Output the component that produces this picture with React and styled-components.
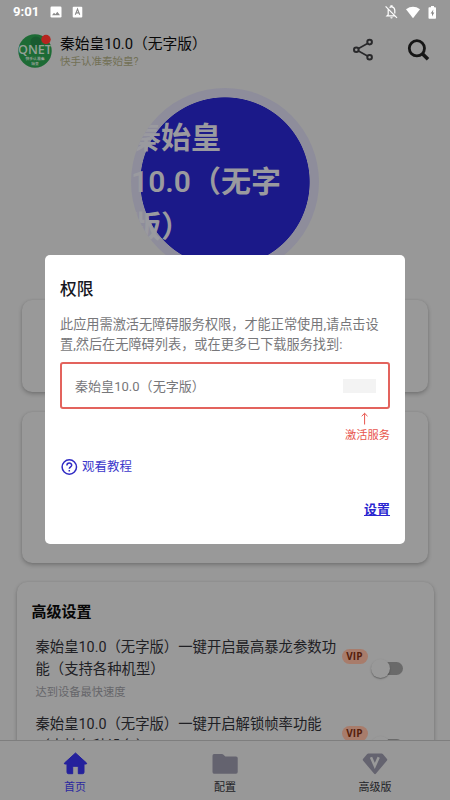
import React from "react";
import styled, { createGlobalStyle } from "styled-components";

const GlobalStyle = createGlobalStyle`
  * { box-sizing: border-box; }
  body { margin: 0; background: #999; }
`;

const Screen = styled.div`
  position: relative;
  width: 450px;
  height: 800px;
  overflow: hidden;
  display: flex;
  flex-direction: column;
  background: #989898;
  font-family: Roboto, "Noto Sans CJK SC", sans-serif;
  color: #0b0b0b;
`;

const StatusBar = styled.div`
  height: 24px;
  padding: 0 13px;
  display: flex;
  align-items: center;
  color: #fff;
`;

const Clock = styled.span`
  width: 37px;
  font-size: 13.2px;
  line-height: 20px;
  font-weight: 700;
`;

const StatusGroup = styled.div`
  display: flex;
  align-items: center;
  gap: ${(p) => p.$gap}px;
  margin-left: ${(p) => (p.$end ? "auto" : "0")};
  svg { display: block; }
`;

const Header = styled.header`
  height: 56px;
  padding: 10px 19px 0 18px;
  display: flex;
  align-items: flex-start;
`;

const Avatar = styled.svg`
  display: block;
`;

const HeaderText = styled.div`
  margin-left: 8px;
  flex: 1;
`;

const AppTitle = styled.div`
  font-size: 14.75px;
  line-height: 20px;
  height: 20px;
  white-space: nowrap;
  color: #080808;
`;

const AppSubtitle = styled.div`
  font-size: 10.5px;
  line-height: 16px;
  color: #727055;
`;

const HeaderActions = styled.div`
  display: flex;
  gap: 32px;
  padding-top: 3px;
  svg { display: block; }
`;

const Content = styled.main`
  flex: 1;
  min-height: 0;
  overflow: hidden;
  display: flex;
  flex-direction: column;
  align-items: center;
`;

const PowerButton = styled.div`
  flex: none;
  margin-top: 8px;
  width: 188px;
  height: 188px;
  border-radius: 50%;
  background: radial-gradient(circle, #1b1989 84.3px, #8e8d9b 85px);
  overflow: hidden;
  display: flex;
  align-items: center;
`;

const PowerLabel = styled.div`
  flex: none;
  width: 188px;
  padding-top: 1px;
  font-size: 30px;
  line-height: 44.5px;
  font-weight: 600;
  color: #9a9a9f;
  white-space: nowrap;
`;

const Card = styled.section`
  flex: none;
  width: ${(p) => p.$width}px;
  height: ${(p) => p.$height}px;
  margin-top: ${(p) => p.$gap}px;
  border-radius: 10px;
  background: #999;
  box-shadow: 0 2px 4px rgba(0, 0, 0, 0.24), 0 0 2px rgba(0, 0, 0, 0.08);
`;

const SettingsCard = styled(Card)`
  padding: 18px 28px 0 15px;
`;

const SectionTitle = styled.h2`
  margin: 0;
  font-size: 15px;
  line-height: 24px;
  font-weight: 700;
  color: #070707;
`;

const SettingRow = styled.div`
  display: flex;
  height: 77px;
  padding: 13px 0 0 4px;
`;

const SettingText = styled.div`
  width: 306px;
`;

const SettingName = styled.div`
  font-size: 14.35px;
  line-height: 21.5px;
  color: #202024;
  white-space: nowrap;
`;

const SettingNote = styled.div`
  margin-top: 4px;
  font-size: 11.25px;
  line-height: 18px;
  color: #66666a;
`;

const VipBadge = styled.span`
  margin-top: 12px;
  width: 26px;
  height: 15px;
  border-radius: 8px;
  background: #a87c6b;
  color: #551e0c;
  font-family: "Open Sans", sans-serif;
  font-size: 10px;
  line-height: 15px;
  font-weight: 700;
  letter-spacing: 0.2px;
  text-align: center;
`;

const Switch = styled.span`
  display: flex;
  align-items: center;
  justify-content: flex-start;
  margin: 24.5px 0 0 6px;
  width: 29px;
  height: 13px;
  border-radius: 7px;
  background: #6a6a6a;
`;

const Thumb = styled.span`
  flex: none;
  margin-left: -3px;
  width: 19px;
  height: 19px;
  border-radius: 50%;
  background: #999;
  box-shadow: 0 1px 1.5px rgba(0, 0, 0, 0.35);
`;

const NavBar = styled.nav`
  flex: none;
  height: 60px;
  border-top: 1px solid #7e7e7e;
  background: #989898;
  display: grid;
  grid-template-columns: repeat(3, 1fr);
`;

const NavItem = styled.div`
  display: flex;
  flex-direction: column;
  align-items: center;
  padding-top: 9px;
  font-size: 11px;
  line-height: 16px;
  color: ${(p) => (p.$active ? "#2b28a0" : "#222226")};
  svg { display: block; margin-bottom: 4px; }
`;

const Dialog = styled.div`
  position: absolute;
  left: 45px;
  top: 255px;
  width: 360px;
  height: 289px;
  padding: 21px 15px 0;
  border-radius: 5px;
  background: #fff;
  display: flex;
  flex-direction: column;
`;

const DialogTitle = styled.h1`
  margin: 0;
  font-size: 16.7px;
  line-height: 28px;
  font-weight: 500;
  color: #17171f;
`;

const DialogBody = styled.p`
  margin: 11px 0 0;
  font-size: 13.18px;
  line-height: 19.5px;
  color: #77777a;
  white-space: nowrap;
`;

const ServiceBox = styled.div`
  margin-top: 8px;
  height: 47px;
  flex: none;
  padding: 0 12px 0 13px;
  border: 2px solid #e3635d;
  border-radius: 3px;
  display: flex;
  align-items: center;
  justify-content: space-between;
  font-size: 13.05px;
  color: #77777a;
`;

const ServicePlaceholder = styled.span`
  width: 33px;
  height: 14px;
  background: #f3f3f3;
`;

const ActivateHint = styled.div`
  align-self: flex-end;
  margin-top: 3px;
  display: flex;
  flex-direction: column;
  align-items: center;
  font-size: 11.25px;
  line-height: 17px;
  color: #e8544d;
  svg { display: block; margin: 0 4px 2px 0; }
`;

const TutorialLink = styled.div`
  margin-top: 13.5px;
  display: flex;
  align-items: center;
  gap: 4px;
  font-size: 12.5px;
  line-height: 18px;
  color: #3d38cb;
  svg { display: block; }
`;

const SettingsLink = styled.span`
  align-self: flex-end;
  margin-top: 24.5px;
  font-size: 13px;
  line-height: 20px;
  font-weight: 700;
  color: #2a26d0;
  text-decoration: underline;
  text-decoration-thickness: 1px;
  text-underline-offset: 1px;
`;

const AvatarText = styled.text`
  font-family: "Open Sans", "Noto Sans CJK SC", sans-serif;
  font-weight: 600;
  text-anchor: middle;
  fill: #93a096;
`;

const settings = [
  {
    lines: ["秦始皇10.0（无字版）一键开启最高暴龙参数功", "能（支持各种机型）"],
    note: "达到设备最快速度",
  },
  {
    lines: ["秦始皇10.0（无字版）一键开启解锁帧率功能", "（支持各种设备）"],
    note: "",
  },
];

function AppLogo() {
  return (
    <Avatar width="34" height="34" viewBox="0 0 34 34">
      <clipPath id="disc"><circle cx="17" cy="17" r="16.7" /></clipPath>
      <g clipPath="url(#disc)">
        <rect width="34" height="34" fill="#1d6b35" />
        <circle cx="18" cy="8" r="5.5" fill="#195b30" />
        <AvatarText x="17" y="20.4" fontSize="12.5" textLength="34" lengthAdjust="spacingAndGlyphs">QNET</AvatarText>
        <AvatarText x="17" y="26.2" fontSize="3.8">快手认准秦</AvatarText>
        <AvatarText x="17" y="30.6" fontSize="3.8">始皇</AvatarText>
      </g>
      <circle cx="28" cy="5.5" r="4.7" fill="#b6241f" />
    </Avatar>
  );
}

export default function App() {
  return (
    <Screen>
      <GlobalStyle />
      <StatusBar>
        <Clock>9:01</Clock>
        <StatusGroup $gap={10}>
          <svg width="12" height="12" viewBox="0 0 12 12">
            <rect x="0.5" y="0.5" width="11" height="11" rx="1.2" fill="#fff" />
            <path d="M2 9.2L4 6.7 5.4 8.2 7.3 5.8 10 9.2Z" fill="#8a8a8a" />
          </svg>
          <svg width="12" height="12" viewBox="0 0 12 12">
            <rect x="0.7" y="0.8" width="9.6" height="10.6" rx="1" fill="#fff" />
            <path d="M3.3 8.7L5.5 3.1 7.7 8.7M4.1 6.9H6.9" fill="none" stroke="#8a8a8a" strokeWidth="1.1" />
          </svg>
        </StatusGroup>
        <StatusGroup $end $gap={8}>
          <svg width="13" height="14" viewBox="0 0 13 14" fill="none" stroke="#fff">
            <path d="M3.2 4.2V9.6L2 10.8H10M4.6 2.7C5 2.3 5.5 2 6 1.9V0.8H7V1.9C9 2.3 9.8 3.8 9.8 5.6V8.4M0.6 1.4L12 12.9" strokeWidth="1.2" />
            <path d="M5.3 12.2H7.7A1.2 1.2 0 0 1 5.3 12.2Z" fill="#fff" stroke="none" />
          </svg>
          <svg width="14" height="13" viewBox="0 0 14 13">
            <path d="M0 3.3Q7-1.6 14 3.3L7 12.2Z" fill="#fff" />
          </svg>
          <svg width="9" height="13" viewBox="0 0 9 13">
            <path d="M3 0H6V1.2H7.2Q8 1.2 8 2V12Q8 12.8 7.2 12.8H1.2Q.5 12.8.5 12V2Q.5 1.2 1.2 1.2H3Z" fill="#fff" />
            <path d="M5.4 3.6L2.6 7.5H4V10.6L6.3 6.5H4.8Z" fill="#888" />
          </svg>
        </StatusGroup>
      </StatusBar>

      <Header>
        <AppLogo />
        <HeaderText>
          <AppTitle>秦始皇10.0（无字版）</AppTitle>
          <AppSubtitle>快手认准秦始皇?</AppSubtitle>
        </HeaderText>
        <HeaderActions>
          <svg width="24" height="24" viewBox="0 0 24 24" fill="none" stroke="#29292b" strokeWidth="2">
            <path d="M7.5 11.5L16.5 6.5M7.5 14L16.5 19" strokeWidth="1.6" />
            <circle cx="5.3" cy="12.7" r="2.3" />
            <circle cx="18.6" cy="5.1" r="2.3" />
            <circle cx="18.6" cy="20.3" r="2.3" />
          </svg>
          <svg width="24" height="24" viewBox="0 0 24 24" fill="none" stroke="#161616">
            <circle cx="9.9" cy="11.3" r="7.6" strokeWidth="2.8" />
            <path d="M15.4 16.8L21 22.3" strokeWidth="3.6" />
          </svg>
        </HeaderActions>
      </Header>

      <Content>
        <PowerButton>
          <PowerLabel>
            秦始皇<br />10.0（无字<br />版）
          </PowerLabel>
        </PowerButton>
        <Card $width={406} $height={92} $gap={24} />
        <Card $width={406} $height={151} $gap={20} />
        <SettingsCard $width={417} $height={280} $gap={19}>
          <SectionTitle>高级设置</SectionTitle>
          {settings.map((item) => (
            <SettingRow key={item.lines[0]}>
              <SettingText>
                {item.lines.map((line) => (
                  <SettingName key={line}>{line}</SettingName>
                ))}
                <SettingNote>{item.note}</SettingNote>
              </SettingText>
              <VipBadge>VIP</VipBadge>
              <Switch><Thumb /></Switch>
            </SettingRow>
          ))}
        </SettingsCard>
      </Content>

      <NavBar>
        <NavItem $active>
          <svg width="25" height="26" viewBox="0 0 25 26">
            <path d="M12.5 3L23.6 13.1Q24 14 23 14H21V22.2Q21 23.7 19.5 23.7H15.3V17.5Q15.3 16.3 14.2 16.3H10.8Q9.7 16.3 9.7 17.5V23.7H5.5Q4 23.7 4 22.2V14H2Q1 14 1.4 13.1Z" fill="#24219c" stroke="#24219c" strokeLinejoin="round" />
          </svg>
          首页
        </NavItem>
        <NavItem>
          <svg width="26" height="26" viewBox="0 0 26 26">
            <path d="M2 4Q.5 4 .5 5.7V22Q.5 23.7 2 23.7H24Q25.7 23.7 25.7 22V8Q25.7 6.4 24 6.4H13.3L11.2 4.5Q10.7 4 10 4Z" fill="#64636f" />
          </svg>
          配置
        </NavItem>
        <NavItem>
          <svg width="26" height="26" viewBox="0 0 26 26">
            <path d="M6.4 3.5H19.6Q20.3 3.5 20.8 4.1L25 9.1Q25.5 9.8 25 10.5L13.8 23.8Q13 24.7 12.2 23.8L1 10.5Q.5 9.8 1 9.1L5.2 4.1Q5.7 3.5 6.4 3.5Z" fill="#64636f" />
            <path d="M9 7.2L12.8 16 16.7 7.2" fill="none" stroke="#999" strokeWidth="2.5" />
          </svg>
          高级版
        </NavItem>
      </NavBar>

      <Dialog>
        <DialogTitle>权限</DialogTitle>
        <DialogBody>
          此应用需激活无障碍服务权限，才能正常使用,请点击设<br />
          置,然后在无障碍列表，或在更多已下载服务找到:
        </DialogBody>
        <ServiceBox>
          秦始皇10.0（无字版）
          <ServicePlaceholder />
        </ServiceBox>
        <ActivateHint>
          <svg width="10" height="13" viewBox="0 0 10 13" fill="none" stroke="#e8544d" strokeWidth="1">
            <path d="M4.6 12.5V1.3M1.7 4.2L4.6 1.3 7.5 4.2" />
          </svg>
          激活服务
        </ActivateHint>
        <TutorialLink>
          <svg width="18" height="18" viewBox="0 0 18 18" fill="none" stroke="#302bc4" strokeWidth="1.5">
            <circle cx="9.3" cy="9" r="7.2" />
            <path d="M6.9 7.4C6.9 4.3 11.7 4.3 11.7 7.2C11.7 8.8 9.3 8.9 9.3 10.8M9.3 12V13.4" />
          </svg>
          观看教程
        </TutorialLink>
        <SettingsLink>设置</SettingsLink>
      </Dialog>
    </Screen>
  );
}
